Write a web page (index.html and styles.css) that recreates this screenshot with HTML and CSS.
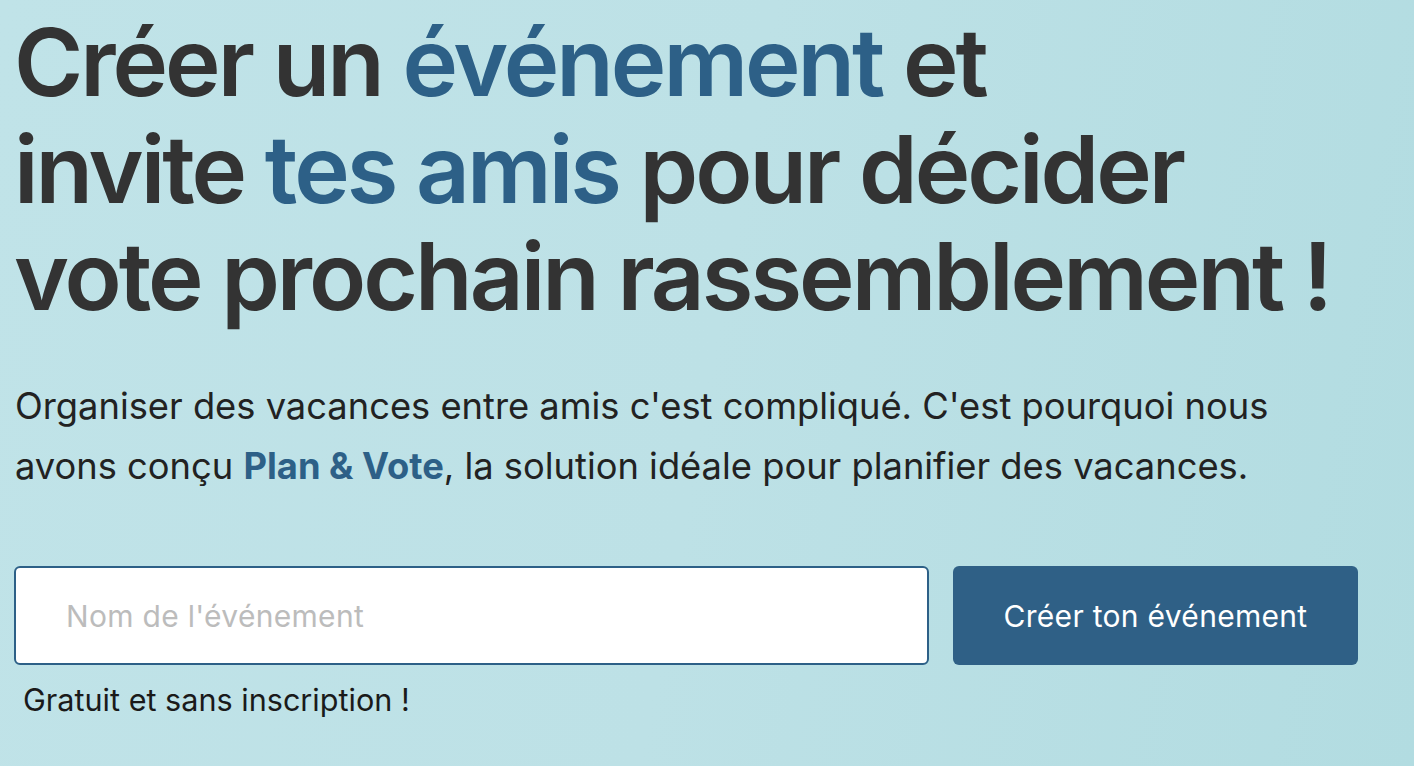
FILE: index.html
```html
<!DOCTYPE html>
<html lang="fr">
<head>
<meta charset="utf-8">
<title>Plan &amp; Vote</title>
<link rel="stylesheet" href="styles.css">
</head>
<body>
<main class="hero">
  <h1 class="title">Créer un <span class="accent">événement</span> et<br>invite <span class="accent">tes amis</span> pour décider<br>vote prochain rassemblement !</h1>
  <p class="lead">Organiser des vacances entre amis c'est compliqué. C'est pourquoi nous<br>avons conçu <strong class="brand">Plan &amp; Vote</strong>, la solution idéale pour planifier des vacances.</p>
  <form class="create">
    <input class="name-input" type="text" placeholder="Nom de l'événement">
    <button class="create-btn" type="button">Créer ton événement</button>
  </form>
  <p class="note">Gratuit et sans inscription !</p>
</main>
</body>
</html>
```
FILE: styles.css
```css
html, body {
  margin: 0;
  height: 100%;
}
body {
  background: linear-gradient(100deg, #c0e3e8 0%, #bde1e6 50%, #b2dce1 100%);
  font-family: Inter, "Noto Sans", sans-serif;
  color: #333;
  overflow: hidden;
}
.hero {
  padding: 9px 0 0 14px;
}
.title {
  margin: 0;
  font-size: 94px;
  font-weight: 600;
  line-height: 107px;
  letter-spacing: -3px;
  color: #333;
  white-space: nowrap;
}
.accent {
  color: #2d6087;
}
.lead {
  margin: 46px 0 0 1px;
  font-size: 36.3px;
  line-height: 60px;
  color: #222;
  white-space: nowrap;
}
.brand {
  color: #2d6087;
  font-weight: 700;
}
.create {
  display: flex;
  gap: 24px;
  margin-top: 70px;
}
.name-input {
  width: 915px;
  height: 99px;
  box-sizing: border-box;
  border: 2px solid #2d6087;
  border-radius: 6px;
  background: #fff;
  padding: 0 0 0 50px;
  font-family: Inter, "Noto Sans", sans-serif;
  font-size: 30px;
  letter-spacing: 0.3px;
  color: #333;
  outline: none;
}
.name-input::placeholder {
  color: #bcbcbc;
}
.create-btn {
  width: 405px;
  height: 99px;
  border: none;
  border-radius: 6px;
  background: #2f6086;
  color: #fff;
  font-family: Inter, "Noto Sans", sans-serif;
  font-size: 30px;
  letter-spacing: 0.3px;
}
.note {
  margin: 16px 0 0 9px;
  font-size: 30.6px;
  color: #1a1a1a;
}
```
